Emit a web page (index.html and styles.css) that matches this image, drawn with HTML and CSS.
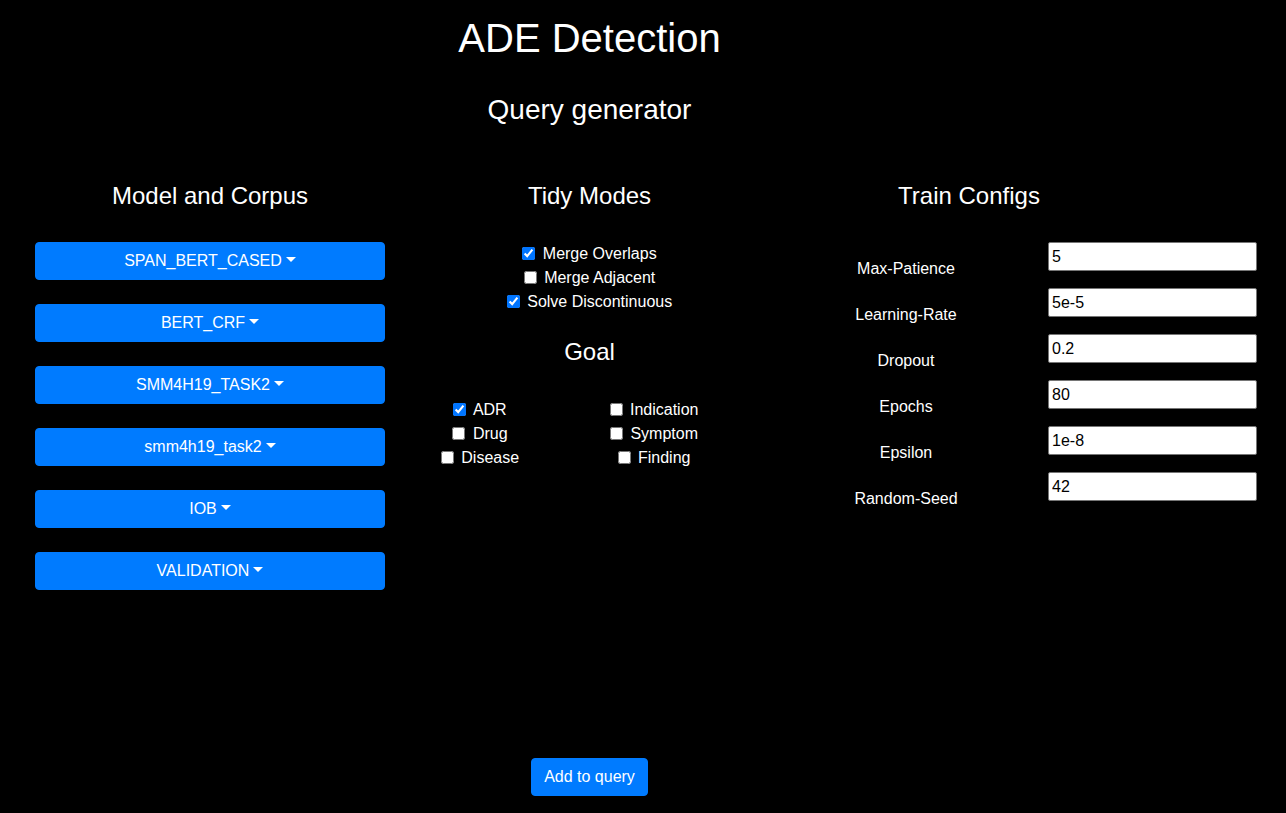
FILE: index.html
```html
<!DOCTYPE html>
<html lang="en">
<head>
<meta charset="utf-8">
<title>ADE Detection</title>
<link rel="stylesheet" href="styles.css">
</head>
<body>
<div class="app">
  <h1 class="title">ADE Detection</h1>
  <h3 class="subtitle">Query generator</h3>

  <div class="columns">
    <section class="col col-model">
      <h4 class="col-heading">Model and Corpus</h4>
      <button class="btn dropdown-toggle">SPAN_BERT_CASED</button>
      <button class="btn dropdown-toggle">BERT_CRF</button>
      <button class="btn dropdown-toggle">SMM4H19_TASK2</button>
      <button class="btn dropdown-toggle">smm4h19_task2</button>
      <button class="btn dropdown-toggle">IOB</button>
      <button class="btn dropdown-toggle">VALIDATION</button>
    </section>

    <section class="col col-tidy">
      <h4 class="col-heading">Tidy Modes</h4>
      <div class="checks">
        <div class="check"><input type="checkbox" id="t1" checked> <label for="t1">Merge Overlaps</label></div>
        <div class="check"><input type="checkbox" id="t2"> <label for="t2">Merge Adjacent</label></div>
        <div class="check"><input type="checkbox" id="t3" checked> <label for="t3">Solve Discontinuous</label></div>
      </div>
      <h4 class="col-heading goal-heading">Goal</h4>
      <div class="goal-grid">
        <div class="goal-col">
          <div class="check"><input type="checkbox" id="g1" checked> <label for="g1">ADR</label></div>
          <div class="check"><input type="checkbox" id="g2"> <label for="g2">Drug</label></div>
          <div class="check"><input type="checkbox" id="g3"> <label for="g3">Disease</label></div>
        </div>
        <div class="goal-col">
          <div class="check"><input type="checkbox" id="g4"> <label for="g4">Indication</label></div>
          <div class="check"><input type="checkbox" id="g5"> <label for="g5">Symptom</label></div>
          <div class="check"><input type="checkbox" id="g6"> <label for="g6">Finding</label></div>
        </div>
      </div>
    </section>

    <section class="col col-train">
      <h4 class="col-heading">Train Configs</h4>
      <div class="cfg-row"><label class="cfg-label">Max-Patience</label><input class="cfg-input" type="text" value="5"></div>
      <div class="cfg-row"><label class="cfg-label">Learning-Rate</label><input class="cfg-input" type="text" value="5e-5"></div>
      <div class="cfg-row"><label class="cfg-label">Dropout</label><input class="cfg-input" type="text" value="0.2"></div>
      <div class="cfg-row"><label class="cfg-label">Epochs</label><input class="cfg-input" type="text" value="80"></div>
      <div class="cfg-row"><label class="cfg-label">Epsilon</label><input class="cfg-input" type="text" value="1e-8"></div>
      <div class="cfg-row"><label class="cfg-label">Random-Seed</label><input class="cfg-input" type="text" value="42"></div>
    </section>
  </div>

  <div class="footer">
    <button class="btn btn-add">Add to query</button>
  </div>
</div>
</body>
</html>
```

FILE: styles.css
```css
* {
  box-sizing: border-box;
}

html, body {
  margin: 0;
  background: #000;
}

body {
  color: #fff;
  font-family: "Liberation Sans", Arial, sans-serif;
  font-size: 16px;
  line-height: 24px;
  height: 813px;
  overflow: hidden;
}

.app {
  width: 1179px;
  padding: 0 20px;
  text-align: center;
}

.title {
  margin: 0;
  padding-top: 14px;
  font-size: 40px;
  line-height: 48px;
  font-weight: 400;
}

.subtitle {
  margin: 31px 0 0;
  font-size: 28px;
  line-height: 34px;
  font-weight: 400;
}

.columns {
  display: flex;
  margin-top: 54px;
  align-items: flex-start;
}

.col {
  flex: none;
}

.col-model {
  width: 380px;
  padding: 0 15px;
}

.col-tidy {
  width: 379px;
}

.col-train {
  width: 380px;
}

.col-heading {
  margin: 0 0 32px;
  font-size: 24px;
  line-height: 29px;
  font-weight: 400;
}

.btn {
  display: block;
  font-family: "Liberation Sans", Arial, sans-serif;
  font-size: 16px;
  line-height: 24px;
  padding: 6px 12px;
  color: #fff;
  background: #007bff;
  border: 1px solid #007bff;
  border-radius: 4px;
  cursor: pointer;
}

.col-model .btn {
  width: 100%;
  margin-bottom: 24px;
}

.col-model .btn:last-child {
  margin-bottom: 0;
}

.dropdown-toggle::after {
  content: "";
  display: inline-block;
  margin-left: 4px;
  vertical-align: 4px;
  border-top: 5px solid #fff;
  border-left: 5px solid transparent;
  border-right: 5px solid transparent;
  border-bottom: 0;
}

.check {
  white-space: nowrap;
}

.check input {
  width: 13px;
  height: 13px;
  margin: 0 3px 0 0;
  vertical-align: -1px;
}

.goal-heading {
  margin-top: 23px;
}

.goal-grid {
  display: grid;
  grid-template-columns: 1fr 1fr;
  width: 348px;
  margin-left: -7px;
}

.cfg-row {
  display: flex;
  align-items: flex-start;
  height: 46px;
}

.cfg-label {
  flex: none;
  width: 254px;
  padding-top: 15px;
  text-align: center;
}

.cfg-input {
  flex: none;
  width: 209px;
  height: 29px;
  margin-left: 15px;
  padding: 1px 3px;
  border: 1px solid #767676;
  border-radius: 2px;
  background: #fff;
  color: #000;
  font-family: "Liberation Sans", Arial, sans-serif;
  font-size: 16px;
}

.footer {
  margin-top: 168px;
  display: flex;
  justify-content: center;
}

.btn-add {
  display: inline-block;
}
```
